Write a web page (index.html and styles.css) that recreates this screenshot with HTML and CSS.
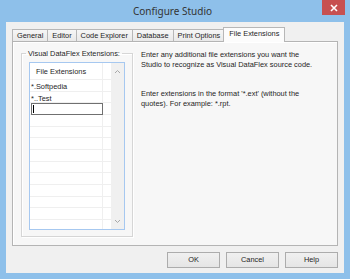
FILE: index.html
```html
<!DOCTYPE html>
<html>
<head>
<meta charset="utf-8">
<title>Configure Studio</title>
<link rel="stylesheet" href="styles.css">
</head>
<body>
<div class="window">
  <div class="titlebar">
    <span class="tb-spacer"></span>
    <span class="title">Configure Studio</span>
    <span class="tb-right">
      <span class="close">
        <svg width="8" height="8" viewBox="0 0 8 8"><path d="M1 1L7 7M7 1L1 7" stroke="#fff" stroke-width="1.6" fill="none"/></svg>
      </span>
    </span>
  </div>
  <div class="client">
    <div class="tabs">
      <div class="tab">General</div>
      <div class="tab">Editor</div>
      <div class="tab">Code Explorer</div>
      <div class="tab">Database</div>
      <div class="tab">Print Options</div>
      <div class="tab active">File Extensions</div>
    </div>
    <div class="page">
      <fieldset class="group">
        <legend class="group-label">Visual DataFlex Extensions:</legend>
        <div class="grid">
          <div class="gcols">
            <div class="row head"><div class="c1">File Extensions</div><div class="c2"></div></div>
            <div class="row"><div class="c1">*.Softpedia</div><div class="c2"></div></div>
            <div class="row"><div class="c1">*..Test</div><div class="c2"></div></div>
            <div class="row"><div class="c1 editing"><span class="edit"><span class="caret"></span></span></div><div class="c2"></div></div>
            <div class="row"><div class="c1"></div><div class="c2"></div></div>
            <div class="row"><div class="c1"></div><div class="c2"></div></div>
            <div class="row"><div class="c1"></div><div class="c2"></div></div>
            <div class="row"><div class="c1"></div><div class="c2"></div></div>
            <div class="row"><div class="c1"></div><div class="c2"></div></div>
            <div class="row"><div class="c1"></div><div class="c2"></div></div>
            <div class="row"><div class="c1"></div><div class="c2"></div></div>
            <div class="row"><div class="c1"></div><div class="c2"></div></div>
            <div class="row"><div class="c1"></div><div class="c2"></div></div>
            <div class="row"><div class="c1"></div><div class="c2"></div></div>
          </div>
          <div class="vscroll">
            <svg width="7" height="5" viewBox="0 0 7 5"><path d="M1 4L3.5 1.5L6 4" stroke="#a8a8a8" stroke-width="1" fill="none"/></svg>
            <svg width="7" height="5" viewBox="0 0 7 5"><path d="M1 1L3.5 3.5L6 1" stroke="#a8a8a8" stroke-width="1" fill="none"/></svg>
          </div>
        </div>
      </fieldset>
      <div class="help">
        <p>Enter any additional file extensions you want the<br>Studio to recognize as Visual DataFlex source code.</p>
        <p>Enter extensions in the format '*.ext' (without the<br>quotes). For example: *.rpt.</p>
      </div>
    </div>
    <div class="buttons">
      <div class="btn">OK</div>
      <div class="btn">Cancel</div>
      <div class="btn">Help</div>
    </div>
  </div>
</div>
</body>
</html>
```

FILE: styles.css
```css
* { box-sizing: border-box; }
html, body { margin: 0; padding: 0; }
body {
  width: 350px;
  height: 279px;
  overflow: hidden;
  font-family: "Liberation Sans", Arial, sans-serif;
  font-size: 7.4px;
  color: #1e1e1e;
}
.window {
  width: 350px;
  height: 279px;
  background: #8ec0ea;
  display: flex;
  flex-direction: column;
  padding-bottom: 6px;
}
.titlebar {
  height: 22px;
  display: grid;
  grid-template-columns: 1fr auto 1fr;
  align-items: start;
  padding-right: 5px;
}
.title {
  font-family: "Noto Sans", "Open Sans", sans-serif;
  font-size: 10px;
  color: #333;
  line-height: 23px;
}
.tb-right {
  justify-self: end;
}
.close {
  display: flex;
  align-items: center;
  justify-content: center;
  width: 23px;
  height: 15px;
  background: #c75050;
}
.client {
  flex: 1;
  margin: 0 6px;
  background: #f0f0f0;
  padding: 5px 6px 5px 6px;
  display: flex;
  flex-direction: column;
}
.tabs {
  display: flex;
  align-items: flex-end;
  height: 14px;
}
.tab {
  height: 12px;
  padding: 0 4px;
  line-height: 11px;
  border: 1px solid #b7b7b7;
  border-bottom: none;
  margin-right: -1px;
  background: linear-gradient(#f6f6f6, #e9e9e9);
  white-space: nowrap;
}
.tab.active {
  position: relative;
  z-index: 1;
  height: 15px;
  margin: 0 -1px -1px -1px;
  padding: 0 5px;
  line-height: 12px;
  background: #fcfcfc;
}
.page {
  height: 205px;
  border: 1px solid #b4b4b4;
  background: #f7f7f7;
  box-shadow: inset 1px 1px 0 #fff;
  display: flex;
  align-items: flex-start;
  padding: 7px 0 0 8px;
}
.group {
  margin: 0;
  width: 112px;
  border: 1px solid #d6d6d6;
  box-shadow: inset 1px 1px 0 #fff, 1px 1px 0 #fff;
  padding: 4px 7px 6px 7px;
}
.group-label {
  padding: 0 2px;
  margin-left: -3px;
  line-height: 9px;
  white-space: nowrap;
}
.grid {
  height: 168px;
  border: 1px solid #a6c8f0;
  background: #fff;
  display: flex;
  overflow: hidden;
}
.gcols {
  flex: 1;
  overflow: hidden;
}
.row {
  display: flex;
  height: 11.67px;
  border-bottom: 1px solid #efefef;
}
.row.head {
  height: 17px;
  border-bottom: 1px solid #efefef;
}
.c1 {
  width: 73px;
  border-right: 1px solid #efefef;
  padding-left: 1px;
  line-height: 13px;
  white-space: nowrap;
}
.head .c1 {
  padding-left: 6px;
  line-height: 18px;
}
.c2 { flex: 1; }
.c1.editing { padding: 0 0 0 1px; }
.edit {
  display: flex;
  align-items: center;
  width: 72px;
  height: 12px;
  border: 1px solid #707070;
  background: #fff;
  padding-left: 1px;
}
.caret {
  width: 1px;
  height: 8px;
  background: #000;
}
.vscroll {
  width: 13px;
  background: #f0f0f0;
  display: flex;
  flex-direction: column;
  justify-content: space-between;
  align-items: center;
  padding: 6px 0 5px 0;
}
.vscroll svg { display: block; }
.help {
  margin-left: 8px;
  margin-top: 1px;
  line-height: 9.8px;
  white-space: nowrap;
}
.help p { margin: 0 0 19.6px 0; }
.buttons {
  display: flex;
  justify-content: flex-end;
  gap: 6px;
  margin-top: 6px;
}
.btn {
  width: 53px;
  height: 16px;
  border: 1px solid #acacac;
  background: linear-gradient(#f0f0f0, #e5e5e5);
  text-align: center;
  line-height: 14px;
}
```
